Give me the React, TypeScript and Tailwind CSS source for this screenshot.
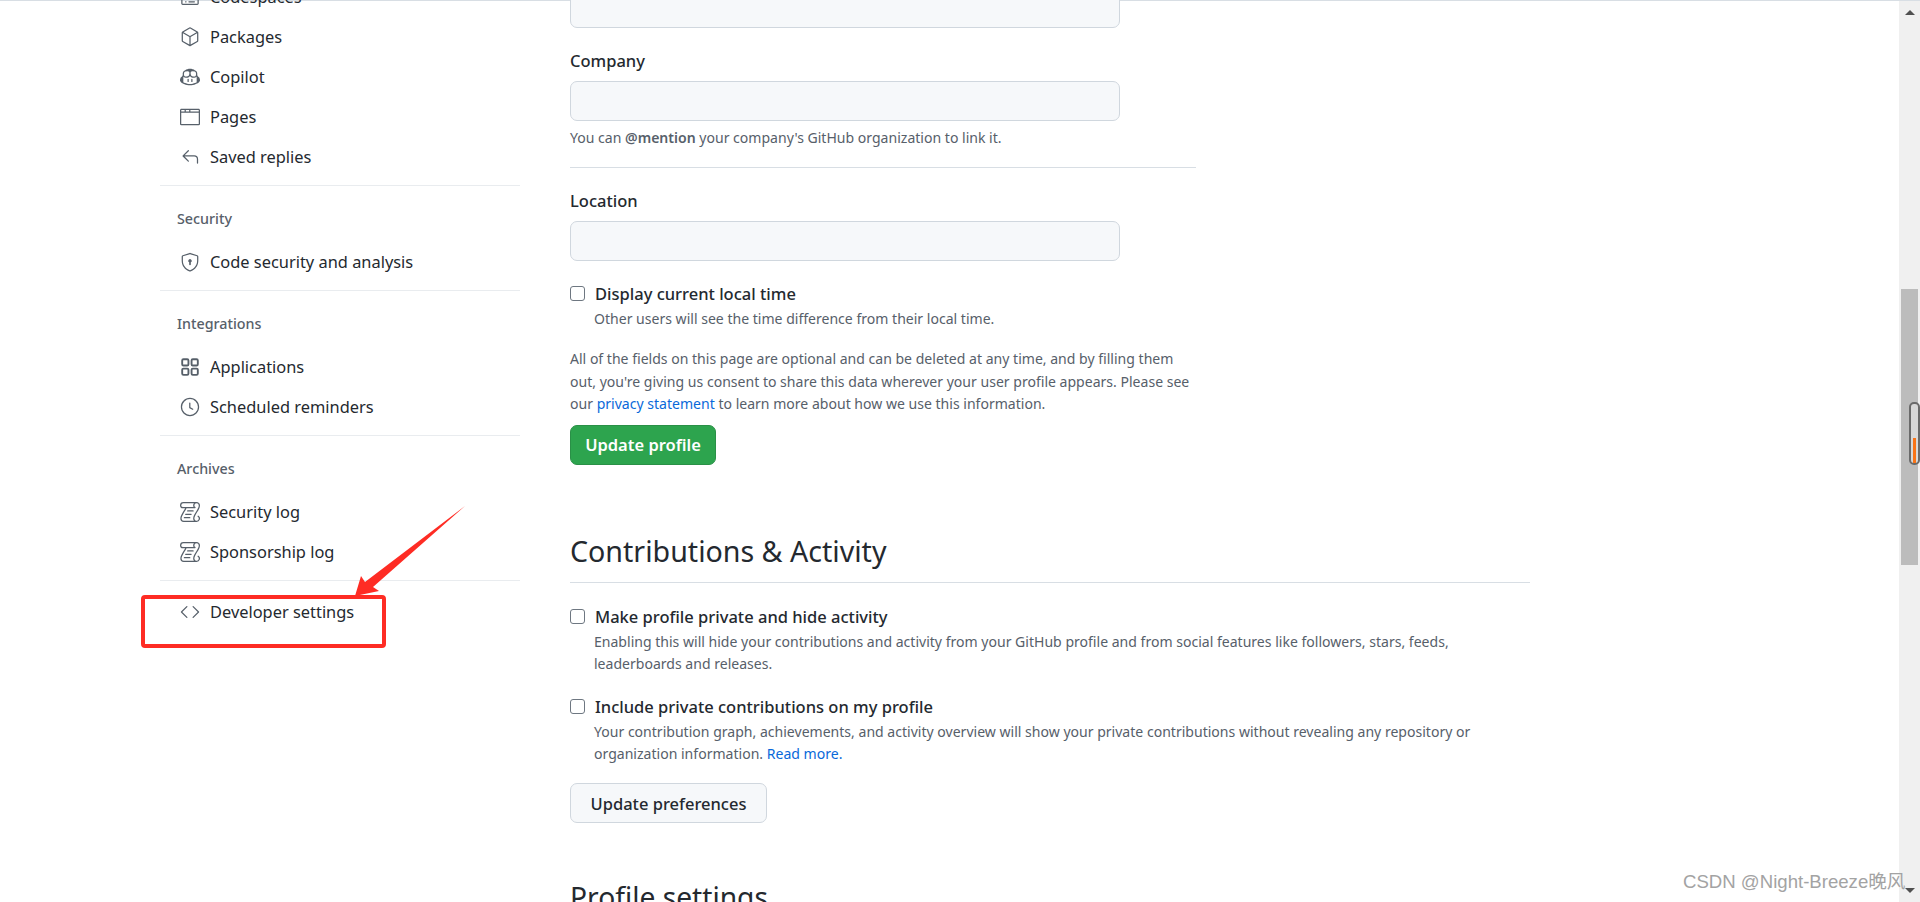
import React from "react";
import {
  GoCodespaces, GoPackage, GoCopilot, GoBrowser, GoReply, GoShieldLock, GoClock, GoLog, GoCode,
} from "react-icons/go";

const font = { fontFamily: '"Noto Sans", "Noto Sans CJK SC", sans-serif' };
type Ico = React.ComponentType<{ size?: number; className?: string }>;

function AppsIcon({ size, className }: { size?: number; className?: string }) {
  return (
    <svg width={size} height={size} viewBox="0 0 16 16" fill="none" stroke="currentColor" strokeWidth="1.5" className={className}>
      <rect x="1.75" y="1.75" width="5" height="5" rx="1" />
      <rect x="9.25" y="1.75" width="5" height="5" rx="1" />
      <rect x="1.75" y="9.25" width="5" height="5" rx="1" />
      <rect x="9.25" y="9.25" width="5" height="5" rx="1" />
    </svg>
  );
}

function NavItem({ icon: Icon, label }: { icon: Ico; label: string }) {
  return (
    <div className="flex h-10 items-center pl-5 text-[16.4px] text-[#24292f]">
      <Icon size={20} className="mr-[10px] shrink-0 text-[#57606a]" />
      <span>{label}</span>
    </div>
  );
}

function NavGroup({ title, items }: { title?: string; items: [Ico, string][] }) {
  return (
    <div className="border-b border-[#e9ecef] pb-[8px]">
      {title && <div className="mb-[10px] mt-[20px] flex h-[26px] items-center pl-[17px] text-[14.3px] font-medium text-[#57606a]">{title}</div>}
      {items.map(([icon, label]) => <NavItem key={label} icon={icon} label={label} />)}
    </div>
  );
}

function Check({ label, children }: { label: string; children: React.ReactNode }) {
  return (
    <div className="flex">
      <span className="mt-[1px] h-[15px] w-[15px] shrink-0 rounded-[3px] border border-[#6e7781] bg-white" />
      <div className="ml-[10px] min-w-0">
        <div className="text-[16.5px] font-medium leading-[18px] text-[#24292f]">{label}</div>
        <div className="-ml-[1px] mt-[5px] text-[14.05px] leading-[22px] text-[#57606a]">{children}</div>
      </div>
    </div>
  );
}

function TextInput() {
  return <div className="h-10 w-[550px] rounded-[7px] border border-[#d0d7de] bg-[#f6f8fa]" />;
}

function Field({ label }: { label: string }) {
  return (
    <>
      <div className="flex h-[24px] items-center text-[16.5px] font-medium text-[#24292f]">{label}</div>
      <div className="mt-[8px]"><TextInput /></div>
    </>
  );
}

export default function App() {
  return (
    <div style={font} className="relative h-[902px] w-[1920px] overflow-hidden bg-white">
      <div className="flex h-full border-t border-[#d8dee4]">
        <div className="flex min-w-0 flex-1">
          <aside className="ml-[160px] mt-[-24px] w-[360px] shrink-0">
            <NavGroup items={[[GoCodespaces, "Codespaces"], [GoPackage, "Packages"], [GoCopilot, "Copilot"], [GoBrowser, "Pages"], [GoReply, "Saved replies"]]} />
            <NavGroup title="Security" items={[[GoShieldLock, "Code security and analysis"]]} />
            <NavGroup title="Integrations" items={[[AppsIcon, "Applications"], [GoClock, "Scheduled reminders"]]} />
            <NavGroup title="Archives" items={[[GoLog, "Security log"], [GoLog, "Sponsorship log"]]} />
            <div className="pt-[11px]"><NavItem icon={GoCode} label="Developer settings" /></div>
          </aside>

          <main className="ml-[50px] mt-[-41px] w-[960px]">
            <div className="h-[68px] w-[550px] rounded-[7px] border border-[#d0d7de] bg-[#f6f8fa]" />
            <div className="mt-[21px]"><Field label="Company" /></div>
            <p className="mt-[6px] text-[14.05px] leading-[22px] text-[#57606a]">
              You can <b className="font-semibold">@mention</b> your company's GitHub organization to link it.
            </p>
            <div className="mt-[18px] w-[626px] border-t border-[#d8dee4]" />
            <div className="mt-[21px]"><Field label="Location" /></div>
            <div className="mt-[24px]">
              <Check label="Display current local time">Other users will see the time difference from their local time.</Check>
            </div>
            <p className="mt-[18px] w-[630px] text-[14.05px] leading-[22.5px] text-[#57606a]">
              All of the fields on this page are optional and can be deleted at any time, and by filling them out, you're giving us consent to share this data wherever your user profile appears. Please see our <span className="text-[#0969da]">privacy statement</span> to learn more about how we use this information.
            </p>
            <button className="mt-[9px] flex h-10 w-[146px] items-center justify-center rounded-[7px] border border-[#2a9047] bg-[#2da44e] pt-[1px] text-[16.5px] font-semibold text-white">Update profile</button>
            <h2 className="mt-[64px] flex h-[46px] items-center text-[28.6px] font-normal text-[#24292f]">Contributions &amp; Activity</h2>
            <div className="mt-[7px] border-t border-[#d8dee4]" />
            <div className="mt-[25px]">
              <Check label="Make profile private and hide activity">Enabling this will hide your contributions and activity from your GitHub profile and from social features like followers, stars, feeds, leaderboards and releases.</Check>
            </div>
            <div className="mt-[23px]">
              <Check label="Include private contributions on my profile">Your contribution graph, achievements, and activity overview will show your private contributions without revealing any repository or organization information. <span className="text-[#0969da]">Read more.</span></Check>
            </div>
            <button className="mt-[18px] flex h-10 w-[197px] items-center justify-center rounded-[7px] border border-[#d0d7de] bg-[#f6f8fa] pt-[3px] text-[16.5px] font-medium text-[#24292f]">Update preferences</button>
            <h2 className="mt-[51px] text-[28.2px] font-normal leading-[46px] text-[#24292f]">Profile settings</h2>
          </main>
        </div>

        <div className="flex h-full w-[21px] shrink-0 flex-col items-center bg-[#f0f0f0] pt-[9px]">
          <span className="h-0 w-0 border-x-[5px] border-b-[5px] border-x-transparent border-b-[#505050]" />
          <div className="mt-[274px] h-[276px] w-[17px] bg-[#bcbcbc]" />
          <div className="flex-1" />
          <span className="mb-[9px] h-0 w-0 border-x-[5px] border-t-[5px] border-x-transparent border-t-[#505050]" />
        </div>
      </div>

      <div className="absolute left-[1909px] top-[402px] h-[63px] w-[11px] rounded-[5px] border-2 border-[#6a6a6a] bg-[#d8d8d8]">
        <div className="absolute bottom-0 left-[2px] h-[25px] w-[3px] bg-[#f97316]" />
      </div>

      <div className="absolute left-[141px] top-[595px] h-[53px] w-[245px] rounded-[4px] border-[4px] border-[#fe2c24]" />
      <svg className="absolute left-[350px] top-[500px]" width="120" height="110" viewBox="0 0 120 110">
        <polygon points="115,6 23,87 29,91 5,96 11,76 15,82" fill="#fe2c24" />
      </svg>

      <div className="absolute left-[1683px] top-[868px] whitespace-nowrap text-[18.6px] leading-[28px] text-[#a3a3a3]" style={{ fontFamily: '"Liberation Sans", "Noto Sans CJK SC", sans-serif' }}>CSDN @Night-Breeze晚风</div>
    </div>
  );
}
